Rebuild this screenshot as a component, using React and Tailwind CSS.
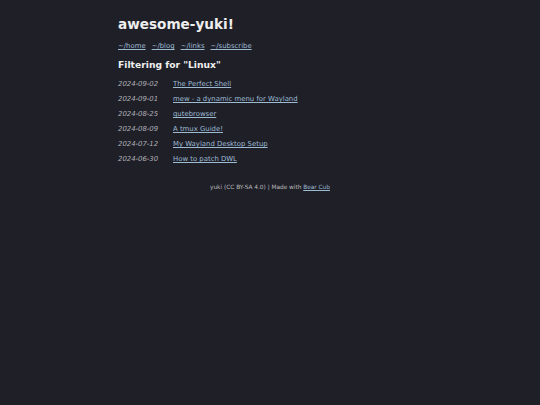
import React from "react";

const posts = [
  { date: "2024-09-02", title: "The Perfect Shell" },
  { date: "2024-09-01", title: "mew - a dynamic menu for Wayland" },
  { date: "2024-08-25", title: "qutebrowser" },
  { date: "2024-08-09", title: "A tmux Guide!" },
  { date: "2024-07-12", title: "My Wayland Desktop Setup" },
  { date: "2024-06-30", title: "How to patch DWL" },
];

const navLinks = ["~/home", "~/blog", "~/links", "~/subscribe"];

const App = () => {
  return (
    <div
      className="min-h-[405px] w-full bg-[#1f1f28] text-[#dddddd]"
      style={{ fontFamily: '"DejaVu Sans", Verdana, sans-serif' }}
    >
      <div className="mx-auto w-[304px] pt-[16px]">
        <header>
          <h1 className="text-[13.6px] font-bold leading-[16px] text-[#eeeeee]">
            awesome-yuki!
          </h1>
          <nav className="mt-[9px] flex gap-[6px] text-[6.9px] leading-[10px]">
            {navLinks.map((link) => (
              <a key={link} href="#" className="text-[#9dbbd3] underline">
                {link}
              </a>
            ))}
          </nav>
        </header>
        <main className="mt-[8px]">
          <h3 className="text-[9.2px] font-bold leading-[12px] text-[#eeeeee]">
            Filtering for "Linux"
          </h3>
          <ul className="mt-[6px] flex flex-col">
            {posts.map((post) => (
              <li
                key={post.date}
                className="flex h-[15px] items-center text-[6.9px]"
              >
                <span className="w-[55px] shrink-0 italic text-[#b2b2b8]">
                  {post.date}
                </span>
                <a href="#" className="text-[#9dbbd3] underline">
                  {post.title}
                </a>
              </li>
            ))}
          </ul>
        </main>
        <footer className="mt-[16px] text-center text-[5.8px] text-[#bbbbbb]">
          yuki (CC BY-SA 4.0) | Made with{" "}
          <a href="#" className="text-[#9dbbd3] underline">
            Bear Cub
          </a>
        </footer>
      </div>
    </div>
  );
};

export default App;
